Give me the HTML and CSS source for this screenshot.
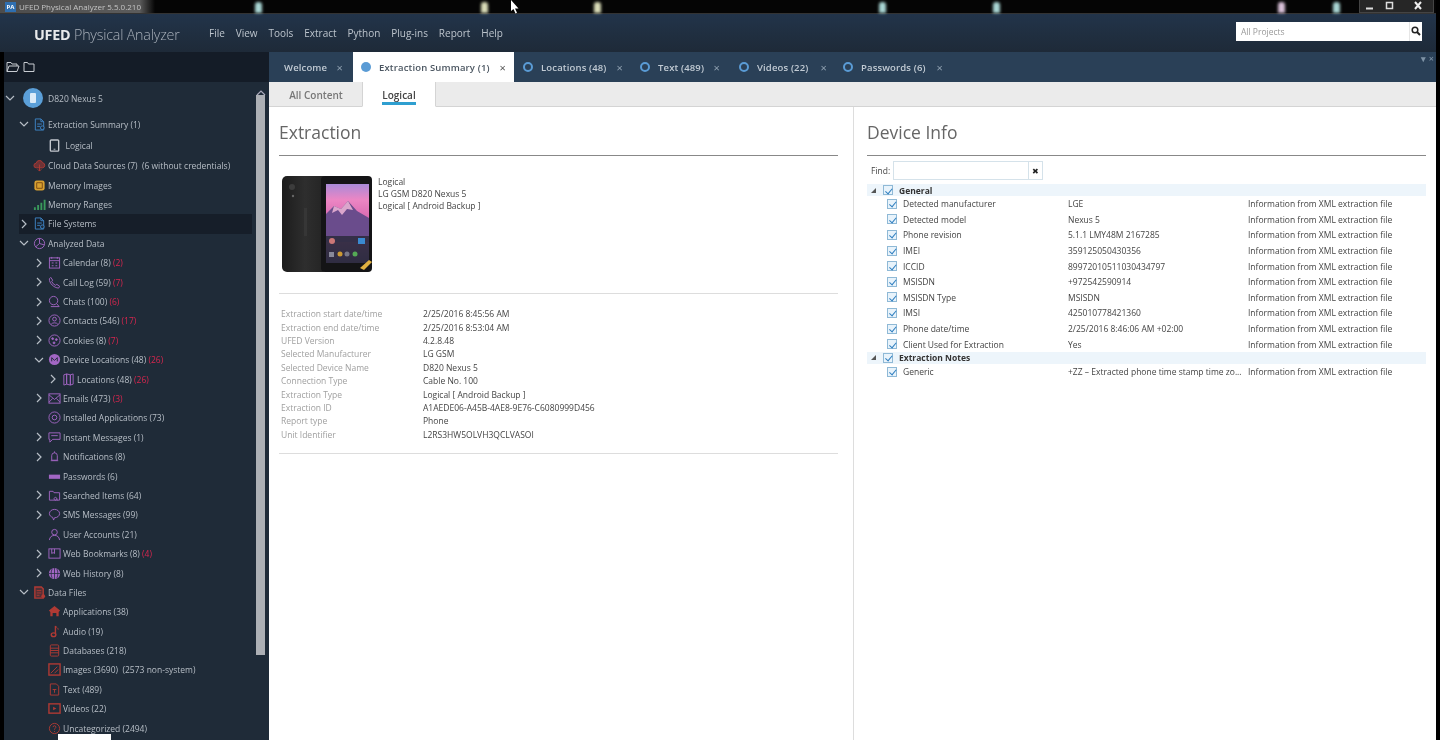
FILE: index.html
```html
<!DOCTYPE html>
<html>
<head>
    <title>UFED Physical Analyzer</title>
    <link rel="stylesheet" href="styles.css">
</head>
<body>

<svg class="defs" width="0" height="0">
    <symbol id="chev-r" viewBox="0 0 10 10"><path d="M3 1l4 4-4 4" fill="none"/></symbol>
    <symbol id="chev-d" viewBox="0 0 10 10"><path d="M1 3l4 4 4-4" fill="none"/></symbol>
    <symbol id="doc" viewBox="0 0 14 14"><path d="M2.5 1h6l3 3v9h-9zM8.500 1v3h3M4.500 6.500h5M4.500 9h3" fill="none"/><circle cx="10" cy="10.500" r="2" fill="#1f2b38"/></symbol>
    <symbol id="phone" viewBox="0 0 14 14"><rect x="2.500" y="1" width="9" height="12" rx="1" fill="none" stroke-width="1.5"/><path d="M6 11h2" fill="none"/></symbol>
    <symbol id="cloud" viewBox="0 0 14 14"><path d="M3.500 9.500a2.500 2.500 0 0 1 0-5 3.500 3.500 0 0 1 6.800-.5 2.800 2.800 0 0 1 .2 5.500z" fill="currentColor" fill-opacity=".55"/><path d="M7 6v7M5 11l2 2 2-2" fill="none"/></symbol>
    <symbol id="chip" viewBox="0 0 14 14"><rect x="1.500" y="1.500" width="11" height="11" rx="2.500" fill="currentColor" stroke="none"/><path d="M4 10V4h6v6z" fill="none" stroke="#7a4a12"/></symbol>
    <symbol id="bars" viewBox="0 0 14 14"><path d="M1 13v-3h2v3zM4.500 13V7.500h2V13zM8 13V5h2v8zM11.500 13V2h2v11z" fill="currentColor" stroke="none"/></symbol>
    <symbol id="pie" viewBox="0 0 14 14"><circle cx="7" cy="7" r="5.500" fill="none"/><path d="M7 7V1.500M7 7l-4 3.500M7 7l5 1.500" fill="none"/></symbol>
    <symbol id="calendar" viewBox="0 0 14 14"><rect x="1.500" y="2" width="11" height="11" fill="none"/><path d="M1.500 5h11M4 1v2M10 1v2M4 7.500h2M8 7.500h2M4 10.500h2M8 10.500h2" fill="none"/></symbol>
    <symbol id="call" viewBox="0 0 14 14"><path d="M3 1.500l2 3-1 1.500c.8 1.800 2.200 3.200 4 4l1.500-1 3 2-1 2C6.500 13 1 7.500 1.500 3z" fill="none"/></symbol>
    <symbol id="chat" viewBox="0 0 14 14"><circle cx="6" cy="6" r="4.500" fill="none"/><path d="M3 12.500h9M9.500 9.500l2.500 3" fill="none"/></symbol>
    <symbol id="contact" viewBox="0 0 14 14"><circle cx="7" cy="7" r="6" fill="none"/><circle cx="7" cy="5.500" r="2" fill="none"/><path d="M3.500 11c1-2 6-2 7 0" fill="none"/></symbol>
    <symbol id="cookie" viewBox="0 0 14 14"><circle cx="7" cy="7" r="6" fill="none"/><circle cx="5" cy="5" r="1" fill="currentColor"/><circle cx="9" cy="6" r="1" fill="currentColor"/><circle cx="6.500" cy="9.500" r="1" fill="currentColor"/></symbol>
    <symbol id="pin" viewBox="0 0 14 14"><circle cx="7" cy="7" r="6" fill="currentColor" stroke="none"/><path d="M4 9V5l3 3 3-3v4" fill="none" stroke="#1f2b38"/></symbol>
    <symbol id="map" viewBox="0 0 14 14"><path d="M2 2l3-1v11l-3 1zM5 1l4 1v11l-4-1zM9 2l3-1v11l-3 1z" fill="none"/></symbol>
    <symbol id="mail" viewBox="0 0 14 14"><rect x="1" y="2" width="12" height="10" fill="none"/><path d="M1 3l6 5 6-5M1 11l4-4M13 11L9 7" fill="none"/></symbol>
    <symbol id="gear" viewBox="0 0 14 14"><circle cx="7" cy="7" r="6" fill="none"/><circle cx="7" cy="7" r="2.500" fill="none"/></symbol>
    <symbol id="im" viewBox="0 0 14 14"><path d="M1 2h12v7H5l-3 3V9H1zM3.500 5h7" fill="none"/></symbol>
    <symbol id="bell" viewBox="0 0 14 14"><path d="M4 11V6a3 3 0 0 1 6 0v5zM3 11.500h8M7 1.500V3" fill="none"/></symbol>
    <symbol id="pass" viewBox="0 0 14 14"><rect x="1" y="5" width="12" height="4.500" fill="currentColor" stroke="none"/></symbol>
    <symbol id="folder" viewBox="0 0 14 14"><path d="M1.500 2.500h4l1 1.500h6v8h-11zM8 9a1.500 1.500 0 1 0 .1 0M9 10.500l1.500 1.500" fill="none"/></symbol>
    <symbol id="sms" viewBox="0 0 14 14"><path d="M7 1.500c3 0 5.500 2 5.500 4.500S10 10.500 7 10.500L6 13 5 10C3 9.500 1.500 8 1.500 6 1.500 3.500 4 1.500 7 1.500z" fill="none"/></symbol>
    <symbol id="user" viewBox="0 0 14 14"><circle cx="7" cy="4.500" r="3" fill="none"/><path d="M1.500 13c.5-3.500 2.500-5 5.500-5s5 1.500 5.500 5" fill="none"/></symbol>
    <symbol id="bookmark" viewBox="0 0 14 14"><rect x="1" y="2" width="12" height="10" fill="none"/><path d="M4 2v5l1.500-1L7 7V2" fill="none"/></symbol>
    <symbol id="globe" viewBox="0 0 14 14"><circle cx="7" cy="7" r="6" fill="currentColor" stroke="none"/><path d="M1 7h12M7 1v12M4.500 2c-1.500 3-1.500 7 0 10M9.500 2c1.500 3 1.500 7 0 10" fill="none" stroke="#1f2b38" stroke-width=".8"/></symbol>
    <symbol id="reddoc" viewBox="0 0 14 14"><path d="M2 1h7l2 2v10H2z" fill="currentColor" fill-opacity=".35" stroke-width="1.5"/><path d="M4 5h5M4 7.500h5M4 10h3" fill="none"/><circle cx="11" cy="11" r="2" fill="currentColor" stroke="none"/></symbol>
    <symbol id="apps" viewBox="0 0 14 14"><path d="M7 1l6 5-1.500 1.500V12H9V8.500H5V12H2.500V7.500L1 6z" fill="currentColor" stroke="none"/></symbol>
    <symbol id="note" viewBox="0 0 14 14"><path d="M8 1v9" fill="none" stroke-width="1.5"/><path d="M8 1c1 2 3 2 3 4" fill="none"/><ellipse cx="6" cy="10.500" rx="2.500" ry="2" fill="none" stroke-width="1.5"/></symbol>
    <symbol id="db" viewBox="0 0 14 14"><rect x="2.500" y="1" width="9" height="12" rx="1" fill="none"/><path d="M2.500 4.500h9M2.500 7h9M2.500 9.500h9" fill="none"/></symbol>
    <symbol id="image" viewBox="0 0 14 14"><rect x="1" y="1" width="12" height="12" fill="none" stroke-width="1.5"/><path d="M3 11l7-7M7 11l4-4" fill="none"/></symbol>
    <symbol id="textdoc" viewBox="0 0 14 14"><path d="M2.500 1H9l2.500 2.500V13h-9zM5 7h4M7 7v3.500" fill="none"/></symbol>
    <symbol id="video" viewBox="0 0 14 14"><rect x="1" y="2" width="12" height="10" fill="none" stroke-width="1.5"/><path d="M5.500 5l3.500 2-3.500 2z" fill="currentColor" stroke="none"/></symbol>
    <symbol id="unknown" viewBox="0 0 14 14"><circle cx="7" cy="7" r="5.500" fill="none"/><path d="M5.500 5.500c0-2 3-2 3 0 0 1.300-1.500 1.300-1.500 2.800M7 9.800v1" fill="none"/></symbol>
</svg>

<div class="titlebar">
    <div class="app-title"><span class="app-badge">PA</span>UFED Physical Analyzer 5.5.0.210</div>
    <i class="spot s1"></i><i class="spot s2"></i><i class="spot s3"></i><i class="spot s4"></i>
    <i class="spot s5"></i><i class="spot s6"></i><i class="spot s7"></i>
    <svg class="cursor" width="10" height="14" viewBox="0 0 10 14"><path d="M1 0v11l2.500-2 2 4.500 1.500-.7-2-4.300h3.500z" fill="#fff"/></svg>
    <div class="win-btns">
        <svg width="20" height="12" viewBox="0 0 20 12"><path d="M6 8.500h7" stroke="#ddd" stroke-width="2"/></svg>
        <svg width="20" height="12" viewBox="0 0 20 12"><rect x="6.500" y="2.500" width="6" height="6" fill="none" stroke="#ddd" stroke-width="1.5"/></svg>
        <svg width="32" height="12" viewBox="0 0 32 12"><path d="M15 2l6 7M21 2l-6 7" stroke="#eee" stroke-width="2"/></svg>
    </div>
</div>

<div class="header">
    <div class="logo"><b>UFED</b> Physical Analyzer</div>
    <nav class="menu">
        <span>File</span><span>View</span><span>Tools</span><span>Extract</span>
        <span>Python</span><span>Plug-ins</span><span>Report</span><span>Help</span>
    </nav>
    <div class="search">
        <span class="search-text">All Projects</span>
        <span class="search-btn">
            <svg width="10" height="10" viewBox="0 0 10 10"><circle cx="4" cy="4" r="2.800" fill="none" stroke="#222" stroke-width="1.5"/><path d="M6 6l3 3" stroke="#222" stroke-width="2"/></svg>
        </span>
    </div>
</div>

<div class="workspace">
    <aside class="sidebar">
        <div class="side-tools">
            <svg width="14" height="12" viewBox="0 0 14 12"><path d="M1 10.500V1.500h4l1 1.500h5v2M1 10.500l2-5.500h10l-2 5.500z" fill="none" stroke="#c8ccd2"/></svg>
            <svg width="12" height="12" viewBox="0 0 12 12"><path d="M1 10.500v-9h3.500l1 1.500H11v7.500z" fill="none" stroke="#c8ccd2"/></svg>
        </div>
        <div class="tree">
            <div class="row root">
                <svg class="chev"><use href="#chev-d"/></svg>
                <span class="device"><svg width="10" height="12" viewBox="0 0 10 12"><rect x="2" y="1" width="6" height="10" rx="1" fill="#dcebf8"/></svg></span>
                <span>D820 Nexus 5</span>
            </div>
            <div class="row l1 tall"><svg class="chev"><use href="#chev-d"/></svg><svg class="ico blue"><use href="#doc"/></svg><span>Extraction Summary (1)</span></div>
            <div class="row leaf tall"><svg class="ico grey"><use href="#phone"/></svg><span>Logical</span></div>
            <div class="row l1 cloud-row"><i class="nochev"></i><svg class="ico red"><use href="#cloud"/></svg><span>Cloud Data Sources (7)&nbsp; (6 without credentials)</span></div>
            <div class="row l1"><i class="nochev"></i><svg class="ico amber"><use href="#chip"/></svg><span>Memory Images</span></div>
            <div class="row l1"><i class="nochev"></i><svg class="ico green"><use href="#bars"/></svg><span>Memory Ranges</span></div>
            <div class="row l1 selected"><svg class="chev"><use href="#chev-r"/></svg><svg class="ico blue"><use href="#doc"/></svg><span>File Systems</span></div>
            <div class="row l1"><svg class="chev"><use href="#chev-d"/></svg><svg class="ico purple"><use href="#pie"/></svg><span>Analyzed Data</span></div>
            <div class="row l2"><svg class="chev"><use href="#chev-r"/></svg><svg class="ico purple"><use href="#calendar"/></svg><span>Calendar (8) <em>(2)</em></span></div>
            <div class="row l2"><svg class="chev"><use href="#chev-r"/></svg><svg class="ico purple"><use href="#call"/></svg><span>Call Log (59) <em>(7)</em></span></div>
            <div class="row l2"><svg class="chev"><use href="#chev-r"/></svg><svg class="ico purple"><use href="#chat"/></svg><span>Chats (100) <em>(6)</em></span></div>
            <div class="row l2"><svg class="chev"><use href="#chev-r"/></svg><svg class="ico purple"><use href="#contact"/></svg><span>Contacts (546) <em>(17)</em></span></div>
            <div class="row l2"><svg class="chev"><use href="#chev-r"/></svg><svg class="ico purple"><use href="#cookie"/></svg><span>Cookies (8) <em>(7)</em></span></div>
            <div class="row l2"><svg class="chev"><use href="#chev-d"/></svg><svg class="ico purple"><use href="#pin"/></svg><span>Device Locations (48) <em>(26)</em></span></div>
            <div class="row l3"><svg class="chev"><use href="#chev-r"/></svg><svg class="ico purple"><use href="#map"/></svg><span>Locations (48) <em>(26)</em></span></div>
            <div class="row l2"><svg class="chev"><use href="#chev-r"/></svg><svg class="ico purple"><use href="#mail"/></svg><span>Emails (473) <em>(3)</em></span></div>
            <div class="row l2"><i class="nochev"></i><svg class="ico purple"><use href="#gear"/></svg><span>Installed Applications (73)</span></div>
            <div class="row l2"><svg class="chev"><use href="#chev-r"/></svg><svg class="ico purple"><use href="#im"/></svg><span>Instant Messages (1)</span></div>
            <div class="row l2"><svg class="chev"><use href="#chev-r"/></svg><svg class="ico purple"><use href="#bell"/></svg><span>Notifications (8)</span></div>
            <div class="row l2"><i class="nochev"></i><svg class="ico purple"><use href="#pass"/></svg><span>Passwords (6)</span></div>
            <div class="row l2"><svg class="chev"><use href="#chev-r"/></svg><svg class="ico purple"><use href="#folder"/></svg><span>Searched Items (64)</span></div>
            <div class="row l2"><svg class="chev"><use href="#chev-r"/></svg><svg class="ico purple"><use href="#sms"/></svg><span>SMS Messages (99)</span></div>
            <div class="row l2"><i class="nochev"></i><svg class="ico purple"><use href="#user"/></svg><span>User Accounts (21)</span></div>
            <div class="row l2"><svg class="chev"><use href="#chev-r"/></svg><svg class="ico purple"><use href="#bookmark"/></svg><span>Web Bookmarks (8) <em>(4)</em></span></div>
            <div class="row l2"><svg class="chev"><use href="#chev-r"/></svg><svg class="ico purple"><use href="#globe"/></svg><span>Web History (8)</span></div>
            <div class="row l1"><svg class="chev"><use href="#chev-d"/></svg><svg class="ico red"><use href="#reddoc"/></svg><span>Data Files</span></div>
            <div class="row l2"><i class="nochev"></i><svg class="ico red"><use href="#apps"/></svg><span>Applications (38)</span></div>
            <div class="row l2"><i class="nochev"></i><svg class="ico red"><use href="#note"/></svg><span>Audio (19)</span></div>
            <div class="row l2"><i class="nochev"></i><svg class="ico red"><use href="#db"/></svg><span>Databases (218)</span></div>
            <div class="row l2"><i class="nochev"></i><svg class="ico red"><use href="#image"/></svg><span>Images (3690)&nbsp; (2573 non-system)</span></div>
            <div class="row l2"><i class="nochev"></i><svg class="ico red"><use href="#textdoc"/></svg><span>Text (489)</span></div>
            <div class="row l2"><i class="nochev"></i><svg class="ico red"><use href="#video"/></svg><span>Videos (22)</span></div>
            <div class="row l2"><i class="nochev"></i><svg class="ico red"><use href="#unknown"/></svg><span>Uncategorized (2494)</span></div>
        </div>
        <div class="scroll-up"><svg width="10" height="6" viewBox="0 0 10 6"><path d="M1 5l4-4 4 4" fill="none" stroke="#aab" stroke-width="1.2"/></svg></div>
        <div class="scroll-thumb"></div>
        <div class="stray"></div>
    </aside>

    <main class="content">
        <div class="tabs">
            <div class="tab t-welcome"><span>Welcome</span><b>×</b></div>
            <div class="tab active"><i class="dot"></i><span>Extraction Summary (1)</span><b>×</b></div>
            <div class="tab t-loc"><i class="ring"></i><span>Locations (48)</span><b>×</b></div>
            <div class="tab t-text"><i class="ring"></i><span>Text (489)</span><b>×</b></div>
            <div class="tab t-vid"><i class="ring"></i><span>Videos (22)</span><b>×</b></div>
            <div class="tab t-pass"><i class="ring"></i><span>Passwords (6)</span><b>×</b></div>
            <div class="tabs-end">▾ ×</div>
        </div>
        <div class="subtabs">
            <div class="subtab">All Content</div>
            <div class="subtab current"><span>Logical</span></div>
        </div>
        <div class="panes">
            <section class="pane left">
                <h2>Extraction</h2>
                <div class="summary">
                    <svg class="phone-pic" width="92" height="96" viewBox="0 0 92 96">
                        <defs>
                            <linearGradient id="sky" x1="0" y1="0" x2="0" y2="1">
                                <stop offset="0" stop-color="#a98ad8"/><stop offset=".2" stop-color="#ec86c4"/><stop offset=".45" stop-color="#d868b0"/><stop offset="1" stop-color="#4a3a66"/>
                            </linearGradient>
                            <linearGradient id="shell" x1="0" y1="0" x2="1" y2="0">
                                <stop offset="0" stop-color="#1c1c1c"/><stop offset=".5" stop-color="#2e2e2e"/><stop offset="1" stop-color="#222"/>
                            </linearGradient>
                        </defs>
                        <rect x="0" y="0" width="46" height="96" rx="5" fill="url(#shell)"/>
                        <circle cx="10" cy="11" r="3" fill="#3c3c3c"/>
                        <circle cx="11" cy="20" r="1.2" fill="#666"/>
                        <rect x="22" y="32" width="3" height="28" fill="#363636"/>
                        <rect x="39" y="0" width="51" height="96" rx="4" fill="#141416"/>
                        <rect x="44" y="8" width="43" height="79" fill="url(#sky)"/>
                        <path d="M44 38l8-8 7 3 7-8 9 10 12 7v24H44z" fill="#6a4c8c"/>
                        <path d="M52 30l7 3 7-8 5 9-6-1-5 6-4-5-6 3z" fill="#dba6cc"/>
                        <path d="M44 60h43v27H44z" fill="#2a2a3c" fill-opacity=".85"/>
                        <circle cx="50" cy="65" r="3" fill="#c77"/><rect x="76" y="62" width="7" height="6" fill="#3a8ad0"/>
                        <rect x="47" y="76" width="5" height="5" fill="#889"/><circle cx="58" cy="78" r="2.500" fill="#c93"/><circle cx="65" cy="78" r="2.500" fill="#778"/><circle cx="73" cy="78" r="2.500" fill="#5a5"/>
                        <path d="M78 92l9-8 3 2-8 8z" fill="#e0b040"/>
                    </svg>
                    <div class="summary-text">
                        <div>Logical</div>
                        <div>LG GSM D820 Nexus 5</div>
                        <div>Logical [ Android Backup ]</div>
                    </div>
                </div>
                <div class="meta">
                    <div class="meta-row"><label>Extraction start date/time</label><span>2/25/2016 8:45:56 AM</span></div>
                    <div class="meta-row"><label>Extraction end date/time</label><span>2/25/2016 8:53:04 AM</span></div>
                    <div class="meta-row"><label>UFED Version</label><span>4.2.8.48</span></div>
                    <div class="meta-row"><label>Selected Manufacturer</label><span>LG GSM</span></div>
                    <div class="meta-row"><label>Selected Device Name</label><span>D820 Nexus 5</span></div>
                    <div class="meta-row"><label>Connection Type</label><span>Cable No. 100</span></div>
                    <div class="meta-row"><label>Extraction Type</label><span>Logical [ Android Backup ]</span></div>
                    <div class="meta-row"><label>Extraction ID</label><span>A1AEDE06-A45B-4AE8-9E76-C6080999D456</span></div>
                    <div class="meta-row"><label>Report type</label><span>Phone</span></div>
                    <div class="meta-row"><label>Unit Identifier</label><span>L2RS3HW5OLVH3QCLVASOI</span></div>
                </div>
            </section>
            <section class="pane right">
                <h2>Device Info</h2>
                <div class="find">
                    <label>Find:</label>
                    <div class="find-input"></div>
                    <div class="find-clear">✖</div>
                </div>
                <div class="info">
                    <div class="info-group"><i class="tri"></i><i class="cb"></i><span>General</span></div>
                    <div class="info-row"><i class="cb"></i><span class="c-name">Detected manufacturer</span><span class="c-val">LGE</span><span>Information from XML extraction file</span></div>
                    <div class="info-row"><i class="cb"></i><span class="c-name">Detected model</span><span class="c-val">Nexus 5</span><span>Information from XML extraction file</span></div>
                    <div class="info-row"><i class="cb"></i><span class="c-name">Phone revision</span><span class="c-val">5.1.1 LMY48M 2167285</span><span>Information from XML extraction file</span></div>
                    <div class="info-row"><i class="cb"></i><span class="c-name">IMEI</span><span class="c-val">359125050430356</span><span>Information from XML extraction file</span></div>
                    <div class="info-row"><i class="cb"></i><span class="c-name">ICCID</span><span class="c-val">89972010511030434797</span><span>Information from XML extraction file</span></div>
                    <div class="info-row"><i class="cb"></i><span class="c-name">MSISDN</span><span class="c-val">+972542590914</span><span>Information from XML extraction file</span></div>
                    <div class="info-row"><i class="cb"></i><span class="c-name">MSISDN Type</span><span class="c-val">MSISDN</span><span>Information from XML extraction file</span></div>
                    <div class="info-row"><i class="cb"></i><span class="c-name">IMSI</span><span class="c-val">425010778421360</span><span>Information from XML extraction file</span></div>
                    <div class="info-row"><i class="cb"></i><span class="c-name">Phone date/time</span><span class="c-val">2/25/2016 8:46:06 AM +02:00</span><span>Information from XML extraction file</span></div>
                    <div class="info-row"><i class="cb"></i><span class="c-name">Client Used for Extraction</span><span class="c-val">Yes</span><span>Information from XML extraction file</span></div>
                    <div class="info-group"><i class="tri"></i><i class="cb"></i><span>Extraction Notes</span></div>
                    <div class="info-row"><i class="cb"></i><span class="c-name">Generic</span><span class="c-val">+ZZ – Extracted phone time stamp time zo...</span><span>Information from XML extraction file</span></div>
                </div>
            </section>
        </div>
    </main>
</div>

</body>
</html>
```

FILE: styles.css
```css
* {
    box-sizing: border-box;
}

html, body {
    margin: 0;
    height: 740px;
    overflow: hidden;
    background: #000;
}

body {
    font-family: "Open Sans", "Noto Sans", sans-serif;
    font-size: 8.5px;
    color: #444;
    position: relative;
    padding-right: 4px;
    filter: blur(0.35px);
}

.defs {
    position: absolute;
}

/* window title bar */
.titlebar {
    height: 13px;
    background: #050505;
    position: relative;
}

.app-title {
    width: 155px;
    height: 13px;
    padding-left: 5px;
    display: flex;
    align-items: center;
    color: #c4c4c4;
    font-size: 8px;
    white-space: nowrap;
    background: linear-gradient(to right, #4c4c4c, #5c5c5c 90%, #050505);
}

.app-badge {
    width: 11px;
    height: 10px;
    margin-right: 3px;
    background: #2f6fb0;
    color: #fff;
    font-size: 6px;
    font-weight: bold;
    text-align: center;
    line-height: 10px;
}

.spot {
    position: absolute;
    top: 2px;
    width: 7px;
    height: 11px;
    border-radius: 3px 3px 0 0;
    filter: blur(1.5px);
    background: #a9d6d4;
}

.s1 { left: 255px; }
.s2 { left: 481px; background: #d9dcb8; }
.s3 { left: 594px; background: #d9dcb8; }
.s4 { left: 879px; }
.s5 { left: 993px; }
.s6 { left: 1278px; background: #d8c0d8; }
.s7 { left: 1333px; }

.cursor {
    position: absolute;
    left: 510px;
    top: 0;
}

.win-btns {
    position: absolute;
    left: 1359px;
    top: 0;
    width: 75px;
    height: 13px;
    display: flex;
    border: 1px solid #444;
    border-top: none;
    background: rgba(60, 60, 60, 0.6);
}

/* app header */
.header {
    height: 39px;
    width: 1436px;
    background: linear-gradient(to bottom, #22344a, #1e2a38);
    display: flex;
    align-items: center;
    border-top: 1px solid #333;
    padding-left: 34px;
}

.logo {
    width: 175px;
    margin-top: 3px;
    font-size: 14.3px;
    font-weight: 300;
    letter-spacing: -0.2px;
    color: #a7afb9;
    white-space: nowrap;
}

.logo b {
    color: #e8eaec;
    font-weight: 700;
}

.menu {
    display: flex;
    gap: 10.9px;
    font-size: 10px;
    color: #bcc4cc;
}

.search {
    margin-left: auto;
    margin-right: 14px;
    margin-top: -4px;
    width: 186px;
    height: 19px;
    background: #fff;
    display: flex;
    align-items: center;
    justify-content: space-between;
    padding-left: 5px;
    color: #999;
}

.search-btn {
    width: 13px;
    height: 19px;
    border-left: 1px solid #e6e6e6;
    display: flex;
    align-items: center;
    justify-content: center;
}

/* left tree */
.workspace {
    display: flex;
    height: 688px;
    width: 1436px;
}

.sidebar {
    width: 265px;
    margin-left: 4px;
    background: #1f2b38;
    position: relative;
    overflow: hidden;
    color: #b7bec6;
    flex: none;
}

.side-tools {
    height: 30px;
    background: #141c27;
    display: flex;
    align-items: center;
    gap: 3px;
    padding-left: 2px;
}

.tree {
    padding-top: 5px;
}

.row {
    height: 19.4px;
    display: flex;
    align-items: center;
    white-space: nowrap;
}

.row.root {
    height: 22px;
    margin-bottom: 4.5px;
    padding-left: 1px;
}

.row.tall {
    height: 21px;
}

.row.cloud-row {
    height: 20px;
}

.l1 { padding-left: 15px; }
.l2 { padding-left: 30px; }
.l3 { padding-left: 44px; }
.leaf { padding-left: 39.5px; }

.selected {
    background: #161e29;
    margin-left: 15px;
    padding-left: 0;
    width: 233px;
}

.chev, .nochev {
    width: 10px;
    height: 10px;
    flex: none;
    display: block;
}

.chev {
    stroke: #b7bec6;
    stroke-width: 1.2;
}

.ico {
    width: 13px;
    height: 13px;
    margin: 0 2px 0 4px;
    flex: none;
    stroke-width: 1;
}

.leaf .ico {
    margin-right: 5px;
}

.root .device {
    width: 20px;
    height: 20px;
    border-radius: 50%;
    background: #5b9fd8;
    margin: 0 5px 0 8px;
    display: flex;
    align-items: center;
    justify-content: center;
    flex: none;
}

.blue { stroke: #3f86c8; color: #3f86c8; }
.grey { stroke: #c3c8ce; color: #c3c8ce; }
.red { stroke: #b03a34; color: #b03a34; }
.amber { stroke: #d8a030; color: #d8a030; }
.green { stroke: #3a9a5c; color: #3a9a5c; }
.purple { stroke: #a266c4; color: #a266c4; }

.row em {
    font-style: normal;
    color: #d8264f;
}

.scroll-up {
    position: absolute;
    left: 252px;
    top: 35px;
}

.scroll-thumb {
    position: absolute;
    left: 252px;
    top: 43px;
    width: 9px;
    height: 560px;
    background: #adb0b5;
}

.stray {
    position: absolute;
    left: 54px;
    top: 682px;
    width: 53px;
    height: 6px;
    background: #fff;
}

/* main area */
.content {
    flex: 1;
    background: #fff;
    display: flex;
    flex-direction: column;
    min-width: 0;
}

.tabs {
    height: 30px;
    background: #2a4057;
    display: flex;
    align-items: center;
    color: #c2cbd4;
    font-size: 9.5px;
    font-weight: 600;
    letter-spacing: 0.15px;
    position: relative;
    padding-left: 1px;
}

.tab {
    height: 30px;
    display: flex;
    align-items: center;
    flex: none;
    white-space: nowrap;
}

.tab b {
    margin-left: auto;
    font-weight: 400;
    font-size: 11px;
    color: #8fa0b0;
}

.t-welcome { width: 83px; padding: 0 10px 0 14px; }
.tab.active { width: 161px; padding: 0 8px 0 8px; background: #fff; color: #4a5560; }
.tab.active b { color: #555; }
.t-loc { width: 117px; padding: 0 8px 0 9px; }
.t-text { width: 99px; padding: 0 10px 0 9px; }
.t-vid { width: 104px; padding: 0 7px 0 9px; }
.t-pass { width: 117px; padding: 0 8px 0 9px; }

.dot, .ring {
    width: 10px;
    height: 10px;
    border-radius: 50%;
    margin-right: 8px;
    flex: none;
}

.dot { background: #5a9bd5; }
.ring { border: 2.5px solid #5a9bd5; }

.tabs-end {
    position: absolute;
    right: 2px;
    top: 0;
    color: #7f93a6;
    font-size: 9px;
}

.subtabs {
    height: 25px;
    background: #ebebeb;
    border-bottom: 1px solid #d4d4d4;
    display: flex;
    font-size: 10px;
    padding-left: 1px;
}

.subtab {
    width: 92px;
    height: 25px;
    color: #777;
    display: flex;
    align-items: center;
    justify-content: center;
    font-weight: 600;
}

.subtab.current {
    width: 74px;
    background: #fff;
    color: #444;
    border-left: 1px solid #d4d4d4;
    border-right: 1px solid #d4d4d4;
    border-bottom: 1px solid #fff;
}

.subtab.current span {
    margin-top: 5px;
    border-bottom: 3px solid #2f9fd0;
}

.panes {
    flex: 1;
    display: flex;
}

.pane h2 {
    margin: 0;
    height: 49px;
    line-height: 50px;
    font-size: 17.5px;
    font-weight: 400;
    color: #666;
    border-bottom: 1px solid #888;
}

.pane.left {
    width: 585px;
    padding: 0 15px 0 10px;
    border-right: 1px solid #ddd;
    flex: none;
}

.pane.right {
    flex: 1;
    padding: 0 10px 0 13px;
}

.summary {
    display: flex;
    gap: 4px;
    padding: 20px 0 21px 3px;
    border-bottom: 1px solid #ddd;
    line-height: 12px;
    color: #444;
}

.phone-pic {
    flex: none;
    display: block;
}

.meta {
    padding: 13px 0 12px 2px;
    border-bottom: 1px solid #ddd;
}

.meta-row {
    height: 13.4px;
    display: flex;
    align-items: center;
}

.meta-row label {
    width: 142px;
    color: #a0a0a0;
}

.find {
    height: 28px;
    display: flex;
    align-items: center;
    padding-left: 4px;
}

.find label {
    width: 22px;
}

.find-input {
    width: 136px;
    height: 19px;
    border: 1px solid #d5e2ea;
}

.find-clear {
    width: 14px;
    height: 19px;
    border: 1px solid #d5e2ea;
    border-left: none;
    text-align: center;
    line-height: 18px;
    font-size: 8px;
    color: #222;
}

.info-group, .info-row {
    display: flex;
    align-items: center;
    white-space: nowrap;
}

.info-row {
    height: 15.6px;
    padding-left: 20px;
}

.info-group {
    height: 12px;
    background: #edf5fb;
    font-weight: 700;
    color: #333;
    padding-left: 4px;
}

.tri {
    width: 0;
    height: 0;
    border-left: 5px solid transparent;
    border-bottom: 5px solid #555;
    margin-right: 7px;
}

.cb {
    width: 10px;
    height: 10px;
    border: 1px solid #8fb9d6;
    background: #e8f3fb;
    flex: none;
    margin-right: 6px;
    position: relative;
}

.cb::after {
    content: "";
    position: absolute;
    left: 2.5px;
    top: 0.5px;
    width: 3px;
    height: 5.5px;
    border: solid #2f7fc0;
    border-width: 0 1.2px 1.2px 0;
    transform: rotate(40deg);
}

.c-name {
    width: 165px;
    flex: none;
}

.c-val {
    width: 180px;
    flex: none;
    overflow: hidden;
}
```
